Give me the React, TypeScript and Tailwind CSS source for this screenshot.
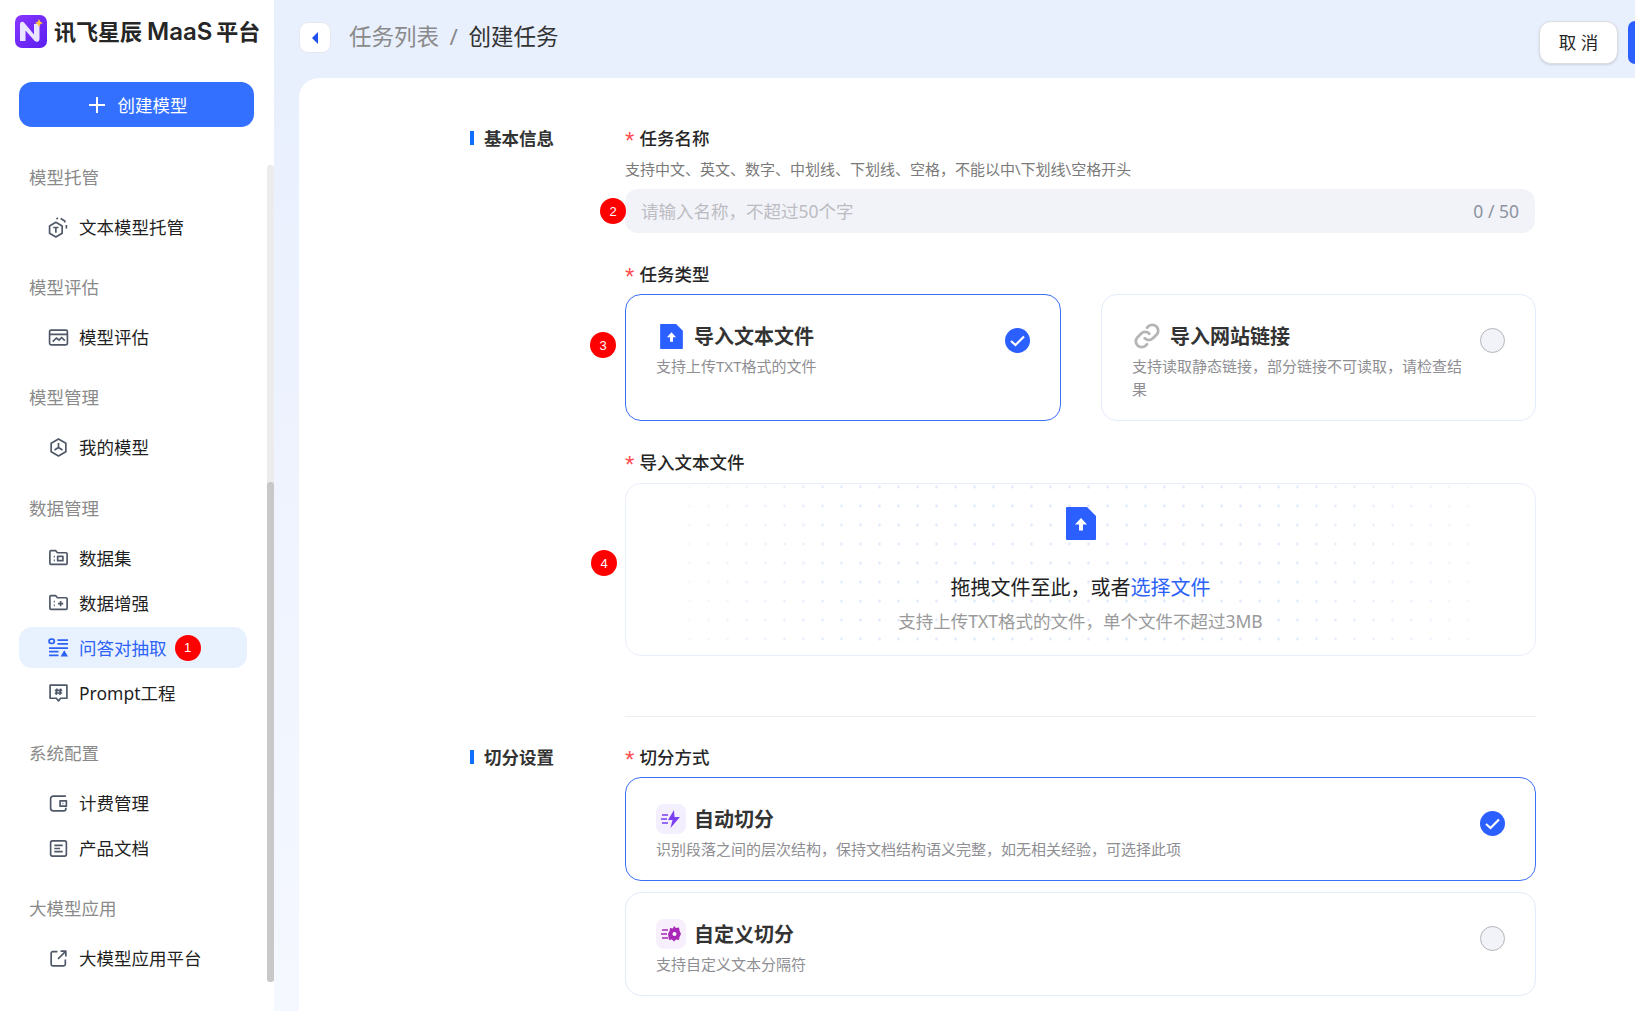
import { ReactNode } from 'react'

const sans = "font-['Noto_Sans','Noto_Sans_CJK_SC',sans-serif]"

// 侧边栏小图标
const navIcons: Record<string, ReactNode> = {
  host: (
    <>
      <path d="M7.500 5l6 3.500v7l-6 3.500-6-3.500v-7z" />
      <path d="M8 1.800l1.500-.8M12 1.500l4 2.300v1.500M17.500 7.500v3.500" />
      <path d="M5 10h5M7.500 10v5" />
    </>
  ),
  eval: (
    <>
      <rect x="1.500" y="3" width="17" height="14" rx="1.500" />
      <path d="M1.500 7h17M4.500 14l3.500-3.500 2.500 2 2.500-2.500 3 3" />
    </>
  ),
  model: (
    <>
      <path d="M10 2l7 4v8l-7 4-7-4V6z" />
      <path d="M10 10V5.800M10 10l-3.800 2.400M10 10l3.800 2.400" />
    </>
  ),
  data: (
    <>
      <path d="M1.800 4.500c0-.6.4-1 1-1h4.600l1.600 2h8.200c.6 0 1 .4 1 1v9c0 .6-.4 1-1 1H2.800c-.6 0-1-.4-1-1z" />
      <path d="M5.500 9.200h1M5.500 12.800h1" />
      <rect x="9.200" y="9" width="5" height="4" />
    </>
  ),
  boost: (
    <>
      <path d="M1.800 4.500c0-.6.4-1 1-1h4.600l1.600 2h8.200c.6 0 1 .4 1 1v9c0 .6-.4 1-1 1H2.800c-.6 0-1-.4-1-1z" />
      <path d="M5.500 9.200h1M5.500 12.800h1M9.500 11h5M12 8.500v5" />
    </>
  ),
  prompt: (
    <>
      <path d="M2 3h16v12.500h-6L10 18l-2-2.500H2z" />
      <path d="M8.500 6.200l-.7 6M12 6.200l-.7 6M6.500 8h7M6.500 10.500h7" />
    </>
  ),
  bill: (
    <>
      <path d="M17 3H5a2.500 2.500 0 0 0-2.500 2.500v9A2.500 2.500 0 0 0 5 17h10a2 2 0 0 0 2-2v-1" />
      <path d="M17.500 7.500h-6v5h6z" />
      <path d="M13.800 10h.8" />
    </>
  ),
  doc: (
    <>
      <rect x="2.500" y="2.800" width="15" height="14.400" rx="1.800" />
      <path d="M6 7h8M6 10h5.500M6 13h8" />
    </>
  ),
  link: (
    <>
      <path d="M16.500 11v4.500a1.500 1.500 0 0 1-1.500 1.500H4.500A1.500 1.500 0 0 1 3 15.500V5a1.500 1.500 0 0 1 1.500-1.500H9" />
      <path d="M12 3h5v5M17 3l-7.500 7.500" />
    </>
  ),
}

function NavIcon({ name }: { name: string }) {
  return (
    <svg viewBox="0 0 20 20" fill="none" stroke="#4f5868" strokeWidth="1.600" strokeLinejoin="round" className="w-[21px] h-[21px] shrink-0">
      {navIcons[name]}
    </svg>
  )
}

const nav = [
  { label: '模型托管', items: [{ icon: 'host', text: '文本模型托管' }] },
  { label: '模型评估', items: [{ icon: 'eval', text: '模型评估' }] },
  { label: '模型管理', items: [{ icon: 'model', text: '我的模型' }] },
  {
    label: '数据管理',
    items: [
      { icon: 'data', text: '数据集' },
      { icon: 'boost', text: '数据增强' },
      { icon: 'qa', text: '问答对抽取', active: true },
      { icon: 'prompt', text: 'Prompt工程' },
    ],
  },
  {
    label: '系统配置',
    items: [
      { icon: 'bill', text: '计费管理' },
      { icon: 'doc', text: '产品文档' },
    ],
  },
  { label: '大模型应用', items: [{ icon: 'link', text: '大模型应用平台' }] },
]

function Badge({ n, className = '' }: { n: number; className?: string }) {
  return (
    <span className={`w-[26px] h-[26px] rounded-full bg-[#fe0000] text-white text-[13px] leading-none flex items-center justify-center font-['Liberation_Sans',sans-serif] ${className}`}>
      {n}
    </span>
  )
}

function FileIcon({ className }: { className: string }) {
  return (
    <svg viewBox="0 0 30 33" className={className}>
      <path d="M1 0h20l9 9v23a1 1 0 0 1-1 1H1a1 1 0 0 1-1-1V1a1 1 0 0 1 1-1z" fill="#2c5fff" />
      <path d="M15 11l6 6.500h-4V23.500h-4V17.500H9z" fill="#fff" />
    </svg>
  )
}

function Radio({ checked }: { checked: boolean }) {
  if (!checked) {
    return <span className="w-[25px] h-[25px] rounded-full bg-[#f1f3f9] border border-[#b5b5bb] shrink-0 ml-[14px] mt-[7px]" />
  }
  return (
    <svg viewBox="0 0 25 25" className="w-[25px] h-[25px] shrink-0 ml-[14px] mt-[7px]">
      <circle cx="12.500" cy="12.500" r="12.500" fill="#2c5fff" />
      <path d="M6 13l4.500 4L19 8.500" fill="none" stroke="#fff" strokeWidth="2.200" />
    </svg>
  )
}

function Option(props: { icon: ReactNode; title: string; desc: string; checked?: boolean; className: string }) {
  const { icon, title, desc, checked = false, className } = props
  return (
    <div className={`flex rounded-[16px] border pl-[30px] pr-[30px] pt-[26px] ${checked ? 'border-[#3d6ff5]' : 'border-[#e4ebfc]'} ${className}`}>
      <div className="flex-1 min-w-0">
        <div className="flex items-center gap-[8px] h-[30px]">
          <span className="w-[30px] h-[30px] flex items-center justify-center shrink-0">{icon}</span>
          <span className="pt-[2px] text-[20px] leading-[30px] font-bold text-[#333]">{title}</span>
        </div>
        <p className="mt-[4px] text-[15px] leading-[23px] text-[#8e8e93]">{desc}</p>
      </div>
      <Radio checked={checked} />
    </div>
  )
}

function Label({ text, className = '' }: { text: string; className?: string }) {
  return (
    <div className={`flex items-center h-[24px] text-[17.500px] leading-[24px] font-medium text-[#262626] ${className}`}>
      <span className="w-[14.500px] text-[#ff4d4f] text-[24px] leading-none font-normal font-['Liberation_Sans',sans-serif] translate-y-[2.500px]">*</span>
      {text}
    </div>
  )
}

function SectionTitle({ text }: { text: string }) {
  return (
    <div className="w-[155px] shrink-0 flex items-center h-[24px] text-[17.500px] font-bold text-[#333]">
      <span className="w-[4px] h-[14px] bg-[#0f6fff] mr-[10px]" />
      {text}
    </div>
  )
}

export default function App() {
  return (
    <div className={`flex h-screen overflow-hidden ${sans}`}>
      <aside className="relative w-[274px] shrink-0 bg-white pl-[19px]">
        <div className="h-[82px] flex items-start pt-[15px] -ml-[4px]">
          <svg viewBox="0 0 32 33" className="w-[32px] h-[33px] shrink-0">
            <defs>
              <linearGradient id="logoBg" x1="0" y1="0" x2="1" y2="1">
                <stop offset="0" stopColor="#8a35ff" />
                <stop offset="1" stopColor="#5a1ff0" />
              </linearGradient>
            </defs>
            <rect width="32" height="33" rx="7" fill="url(#logoBg)" />
            <path d="M5 9c0-2 2.500-3 4-1.500l10 12V9h5.500v15c0 3-3.300 3.600-5 1.800L10.500 15.500V26H5z" fill="#e9e4ff" />
            <path d="M24 4l1.300 2.700L28 8l-2.700 1.300L24 12l-1.300-2.700L20 8l2.700-1.300z" fill="#ffc53d" />
          </svg>
          <div className="ml-[7px] mt-[1px] flex items-center h-[30px] text-[22px] font-bold text-[#262626] whitespace-nowrap">
            讯飞星辰<span className="ml-[5px] mr-[4px] mt-[1px] text-[24px] font-['Inter',sans-serif] font-semibold">MaaS</span>平台
          </div>
        </div>

        <button className="w-[235px] h-[45px] rounded-[13px] bg-[#3370ff] text-white flex items-center justify-center gap-[13px] pl-[3px] pt-[1px] text-[17.500px]">
          <svg viewBox="0 0 16 16" className="w-[16px] h-[16px]" stroke="#fff" strokeWidth="2">
            <path d="M8 0v16M0 8h16" />
          </svg>
          创建模型
        </button>

        <nav className="mt-[29.500px]">
          {nav.map((group) => (
            <div key={group.label} className="mb-[19.300px]">
              <div className="h-[41px] mb-[9px] pl-[10px] flex items-center text-[17.500px] text-[#8a8a8a]">{group.label}</div>
              <div className="flex flex-col gap-[4px]">
                {group.items.map((item) => {
                  const active = 'active' in item && item.active
                  return (
                    <div
                      key={item.text}
                      className={`w-[228px] h-[41px] rounded-[13px] pl-[28.500px] flex items-center gap-[10.500px] text-[17.500px] ${
                        active ? 'bg-[#e8f2ff] text-[#2c62f6]' : 'text-[#1f1f1f]'
                      }`}
                    >
                      {item.icon === 'qa' ? (
                        <svg viewBox="0 0 20 20" className="w-[21px] h-[21px] shrink-0" fill="none" stroke="#2c62f6" strokeWidth="1.700">
                          <rect x="1" y="2" width="5" height="4" rx="2" />
                          <path d="M9 3h10M9 6.500h10M1 10.500h18M1 14h9M1 17.500h9" />
                          <path d="M15.500 12.500l3.500 6h-7z" fill="#2c62f6" stroke="none" />
                        </svg>
                      ) : (
                        <NavIcon name={item.icon} />
                      )}
                      <span>{item.text}</span>
                      {active && <Badge n={1} className="-ml-[2.500px]" />}
                    </div>
                  )
                })}
              </div>
            </div>
          ))}
        </nav>

        {/* 滚动条 */}
        <div className="absolute left-[267px] top-[165px] w-[7px] h-[817px] bg-[#ececec] rounded-[3px]">
          <div className="absolute left-0 top-[317px] w-[7px] h-[500px] bg-[#c8c8c8] rounded-[3px]" />
        </div>
      </aside>

      <main className="flex-1 min-w-0 flex flex-col bg-linear-to-b from-[#e8effd] to-[#f5f8ff]">
        <header className="h-[78px] shrink-0 flex pl-[25px] pt-[21px]">
          <button className="w-[32px] h-[31px] mt-[1px] rounded-[9px] bg-white border border-[#e6e8ef] flex items-center justify-center">
            <svg viewBox="0 0 6 12" className="w-[6px] h-[12px]">
              <path d="M6 0v12L0 6z" fill="#1f4ff0" />
            </svg>
          </button>
          <div className="ml-[18px] h-[31px] flex items-center text-[22.500px] text-[#8a8a8a]">
            任务列表
            <span className="mx-[10.500px] text-[#8a8a8a]">/</span>
            <span className="text-[#333]">创建任务</span>
          </div>
          <div className="ml-auto flex gap-[10px]">
            <button className="w-[79px] h-[43px] rounded-[12px] bg-white border border-[#dcdde2] shadow-sm text-[17.500px] text-[#262626]">取 消</button>
            <span className="w-[7px] h-[43px] rounded-l-[12px] bg-[#2c5fff]" />
          </div>
        </header>

        <section className="flex-1 min-h-0 overflow-hidden ml-[25px] bg-white rounded-tl-[20px] pl-[171px] pt-[48px]">
          <div className="flex">
            <SectionTitle text="基本信息" />
            <div className="w-[911px]">
              <Label text="任务名称" />
              <p className="mt-[8px] h-[22px] text-[15px] leading-[22px] text-[#7a7a7a]">
                支持中文、英文、数字、中划线、下划线、空格，不能以中\下划线\空格开头
              </p>

              <div className="relative mt-[9px] mr-[1px] h-[44px] rounded-[13px] bg-[#f1f3f9] pl-[16px] pr-[16px] flex items-center justify-between text-[17.500px]">
                <span className="text-[#bcbcc2]">请输入名称，不超过50个字</span>
                <span className="text-[#8d93a0]">0 / 50</span>
                <Badge n={2} className="absolute -left-[25px] top-[9px]" />
              </div>

              <Label text="任务类型" className="mt-[29px]" />
              <div className="relative mt-[8px] flex gap-[40px]">
                <Option
                  className="w-[436px] h-[127px]"
                  checked
                  icon={<FileIcon className="w-[23px] h-[25px]" />}
                  title="导入文本文件"
                  desc="支持上传TXT格式的文件"
                />
                <Option
                  className="w-[435px] h-[127px]"
                  icon={
                    <svg viewBox="0 0 24 24" className="w-[28px] h-[28px]" fill="none" stroke="#b5b5b5" strokeWidth="2.400" strokeLinecap="round">
                      <path d="M10 14a5 5 0 0 0 7.100 0l3-3a5 5 0 0 0-7.100-7.100l-1 1" />
                      <path d="M14 10a5 5 0 0 0-7.100 0l-3 3a5 5 0 0 0 7.100 7.100l1-1" />
                    </svg>
                  }
                  title="导入网站链接"
                  desc="支持读取静态链接，部分链接不可读取，请检查结果"
                />
                <Badge n={3} className="absolute -left-[35px] top-[38px]" />
              </div>

              <Label text="导入文本文件" className="mt-[29px]" />
              <div className="relative mt-[9px] h-[173px] rounded-[16px] border border-[#e9eefc] pt-[23px] flex flex-col items-center">
                <div className="absolute left-[54px] top-0 w-[800px] h-[167px] bg-[radial-gradient(circle,#dfe9fb_1.200px,transparent_1.500px)] bg-size-[19px_19px] bg-position-[0_-6.500px] [mask-image:linear-gradient(to_right,#0005,#000_25%,#000_75%,#0005)]" />
                <FileIcon className="relative w-[30px] h-[33px]" />
                <p className="relative mt-[33px] h-[30px] text-[20px] leading-[30px] text-[#1f1f1f]">
                  拖拽文件至此，或者<span className="text-[#2c62f6]">选择文件</span>
                </p>
                <p className="relative mt-[6px] h-[24px] text-[17.500px] leading-[24px] text-[#9a9a9a]">支持上传TXT格式的文件，单个文件不超过3MB</p>
                <Badge n={4} className="absolute -left-[35px] top-[66px]" />
              </div>

              <div className="mt-[60px] h-px bg-[#eeeeee]" />
            </div>
          </div>

          <div className="flex mt-[28px]">
            <SectionTitle text="切分设置" />
            <div className="w-[911px]">
              <Label text="切分方式" />
              <div className="mt-[8px] flex flex-col gap-[11px]">
                <Option
                  className="h-[104px]"
                  checked
                  icon={
                    <span className="w-[30px] h-[30px] rounded-[8px] bg-[#f3efff] flex items-center justify-center">
                      <svg viewBox="0 0 20 18" className="w-[20px] h-[18px]" fill="none" stroke="#7a3ff2" strokeWidth="1.600">
                        <path d="M1 5h6M0 9h6M1 13h6" />
                        <path d="M13 0L7 10h4.500L9.500 18 19 7h-5.500z" fill="#7a3ff2" stroke="none" />
                      </svg>
                    </span>
                  }
                  title="自动切分"
                  desc="识别段落之间的层次结构，保持文档结构语义完整，如无相关经验，可选择此项"
                />
                <Option
                  className="h-[104px]"
                  icon={
                    <span className="w-[30px] h-[30px] rounded-[8px] bg-[#f7effb] flex items-center justify-center">
                      <svg viewBox="0 0 20 18" className="w-[20px] h-[18px]" fill="none" stroke="#a928b8" strokeWidth="1.600">
                        <path d="M1 5h6M0 9h6M1 13h6" />
                        <path d="M13 1l2 2 3-.5.500 3L20 9l-1.500 3-.5 3-3-.5-2 2-2-2-3 .5-.5-3L7 9l1.500-3 .5-3 3 .5z" fill="#a928b8" stroke="none" />
                        <circle cx="13.500" cy="9" r="2" fill="#fff" stroke="none" />
                      </svg>
                    </span>
                  }
                  title="自定义切分"
                  desc="支持自定义文本分隔符"
                />
              </div>
            </div>
          </div>
        </section>
      </main>
    </div>
  )
}
